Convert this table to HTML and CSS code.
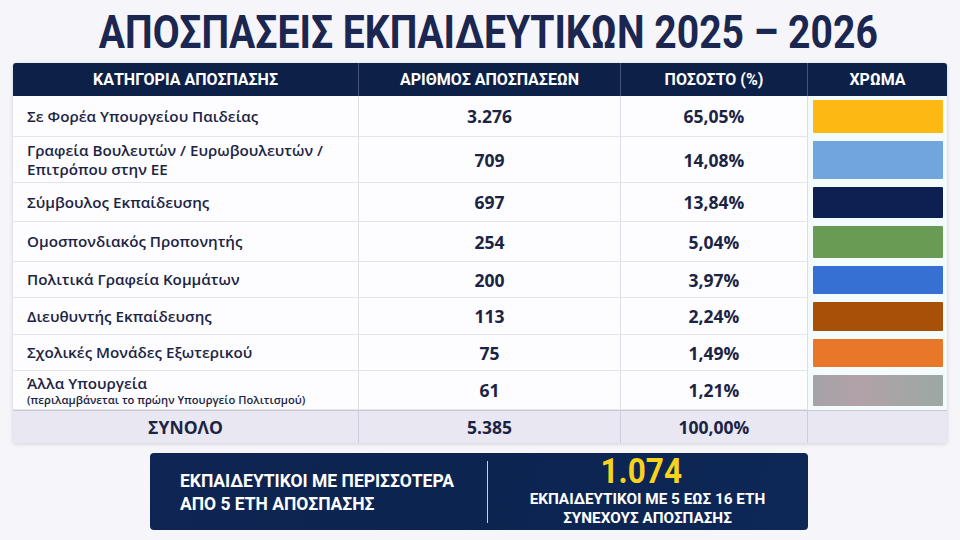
FILE: index.html
```html
<!DOCTYPE html>
<html lang="el">
<head>
<meta charset="utf-8">
<link rel="stylesheet" href="styles.css">
</head>
<body>
<div class="page">
  <h1 class="title"><span class="squeeze">ΑΠΟΣΠΑΣΕΙΣ ΕΚΠΑΙΔΕΥΤΙΚΩΝ 2025 – 2026</span></h1>
  <div class="table">
    <div class="th c1">ΚΑΤΗΓΟΡΙΑ ΑΠΟΣΠΑΣΗΣ</div>
    <div class="th">ΑΡΙΘΜΟΣ ΑΠΟΣΠΑΣΕΩΝ</div>
    <div class="th">ΠΟΣΟΣΤΟ (%)</div>
    <div class="th last">ΧΡΩΜΑ</div>

    <div class="td cat">Σε Φορέα Υπουργείου Παιδείας</div>
    <div class="td num">3.276</div>
    <div class="td num">65,05%</div>
    <div class="td sw"><span class="swatch s1"></span></div>

    <div class="td cat">Γραφεία Βουλευτών / Ευρωβουλευτών /<br>Επιτρόπου στην ΕΕ</div>
    <div class="td num">709</div>
    <div class="td num">14,08%</div>
    <div class="td sw"><span class="swatch s2"></span></div>

    <div class="td cat">Σύμβουλος Εκπαίδευσης</div>
    <div class="td num">697</div>
    <div class="td num">13,84%</div>
    <div class="td sw"><span class="swatch s3"></span></div>

    <div class="td cat">Ομοσπονδιακός Προπονητής</div>
    <div class="td num">254</div>
    <div class="td num">5,04%</div>
    <div class="td sw"><span class="swatch s4"></span></div>

    <div class="td cat">Πολιτικά Γραφεία Κομμάτων</div>
    <div class="td num">200</div>
    <div class="td num">3,97%</div>
    <div class="td sw"><span class="swatch s5"></span></div>

    <div class="td cat">Διευθυντής Εκπαίδευσης</div>
    <div class="td num">113</div>
    <div class="td num">2,24%</div>
    <div class="td sw"><span class="swatch s6"></span></div>

    <div class="td cat">Σχολικές Μονάδες Εξωτερικού</div>
    <div class="td num">75</div>
    <div class="td num">1,49%</div>
    <div class="td sw"><span class="swatch s7"></span></div>

    <div class="td cat"><span class="two"><span class="l1">Άλλα Υπουργεία</span><small>(περιλαμβάνεται το πρώην Υπουργείο Πολιτισμού)</small></span></div>
    <div class="td num">61</div>
    <div class="td num">1,21%</div>
    <div class="td sw"><span class="swatch s8"></span></div>

    <div class="tt">ΣΥΝΟΛΟ</div>
    <div class="tt">5.385</div>
    <div class="tt">100,00%</div>
    <div class="tt last"></div>
  </div>
  <div class="banner">
    <div class="bleft"><span class="lsq">ΕΚΠΑΙΔΕΥΤΙΚΟΙ ΜΕ ΠΕΡΙΣΣΟΤΕΡΑ<br>ΑΠΟ 5 ΕΤΗ ΑΠΟΣΠΑΣΗΣ</span></div>
    <div class="bdiv"></div>
    <div class="bright">
      <div class="big"><span class="bsq">1.074</span></div>
      <div class="small">ΕΚΠΑΙΔΕΥΤΙΚΟΙ ΜΕ 5 ΕΩΣ 16 ΕΤΗ<br>ΣΥΝΕΧΟΥΣ ΑΠΟΣΠΑΣΗΣ</div>
    </div>
  </div>
</div>
</body>
</html>
```

FILE: styles.css
```css
* { box-sizing: border-box; }
html, body { margin: 0; padding: 0; }
body {
  width: 960px;
  height: 540px;
  overflow: hidden;
  background: #f6f6fa;
  font-family: "Open Sans", "Noto Sans", sans-serif;
  color: #1a2440;
}
.page {
  display: flex;
  flex-direction: column;
  align-items: center;
}
.title {
  margin: 0;
  width: 960px;
  height: 63px;
  padding-top: 4px;
  padding-left: 16px;
  font-family: "Roboto", sans-serif;
  font-weight: 700;
  font-size: 46px;
  line-height: 56px;
  color: #1b2750;
  text-align: center;
  white-space: nowrap;
  display: flex;
  justify-content: center;
}
.squeeze {
  display: inline-block;
  transform: scaleX(0.85);
  transform-origin: center;
}
.table {
  width: 934px;
  display: grid;
  grid-template-columns: 346px 262px 187px 139px;
  grid-template-rows: 33px 41px 46px 39px 40px 36px 37px 36px 39px 33px;
  background: #fdfdff;
  box-shadow: 0 1px 4px rgba(40, 50, 90, 0.18);
  border-radius: 3px 3px 0 0;
}
.th {
  background: #0d2148;
  color: #ffffff;
  font-family: "Roboto", sans-serif;
  font-weight: 700;
  font-size: 16px;
  display: flex;
  align-items: center;
  justify-content: center;
  border-right: 1px solid #44557a;
}
.th.c1 { border-top-left-radius: 3px; }
.th.last { border-right: none; border-top-right-radius: 3px; }
.td {
  display: flex;
  align-items: center;
  border-right: 1px solid #dddde8;
  border-bottom: 1px solid #e4e4ee;
  background: #fdfdff;
}
.td.cat {
  padding-left: 14px;
  font-size: 15.2px;
  font-weight: 600;
  line-height: 19px;
  color: #1c2444;
}
.td.num {
  justify-content: center;
  font-size: 17.5px;
  font-weight: 700;
  color: #1c2444;
}
.td.sw {
  border-right: none;
  border-bottom: none;
  padding: 4px 4px 4px 5px;
  background: #f4fbfd;
}
.two { display: flex; flex-direction: column; margin-top: 1px; }
.two .l1 { line-height: 18px; }
.two small { font-size: 11.2px; font-weight: 600; line-height: 15px; }
.swatch { display: block; width: 100%; height: 100%; border-radius: 1px; }
.s1 { background: #fdb813; }
.s2 { background: #70a5dd; }
.s3 { background: #0e1f52; }
.s4 { background: #6a9b55; }
.s5 { background: #3670d2; }
.s6 { background: #a84f08; }
.s7 { background: #e8772a; }
.s8 { background: linear-gradient(90deg, #a5a2a9, #b1a2a8 35%, #9ca8a3); }
.tt {
  background: #e9e8f2;
  display: flex;
  align-items: center;
  justify-content: center;
  font-size: 17.5px;
  font-weight: 700;
  color: #1c2444;
  border-right: 1px solid #cfcfdc;
  border-top: 1px solid #c9c9d6;
}
.tt.last { border-right: none; }
.banner {
  margin-top: 10px;
  width: 658px;
  height: 77px;
  margin-left: -3px;
  background: linear-gradient(100deg, #0f2553 0%, #0c2450 50%, #0d2757 100%);
  border-radius: 4px;
  display: flex;
  align-items: center;
  color: #ffffff;
  font-family: "Roboto", sans-serif;
  font-weight: 700;
}
.bleft {
  width: 337px;
  padding-left: 30px;
  font-size: 19px;
  line-height: 23px;
  white-space: nowrap;
}
.lsq {
  display: inline-block;
  transform: scaleX(0.92);
  transform-origin: left center;
}
.bdiv {
  width: 1px;
  height: 62px;
  background: #c8d0e0;
}
.bright {
  flex: 1;
  display: flex;
  flex-direction: column;
  align-items: center;
  text-align: center;
}
.big {
  font-size: 35px;
  line-height: 33px;
  color: #f7d21e;
  margin-bottom: 2px;
  margin-right: 12px;
}
.bsq {
  display: inline-block;
  transform: scaleX(0.9);
}
.small {
  font-size: 15.3px;
  line-height: 19px;
}
```
